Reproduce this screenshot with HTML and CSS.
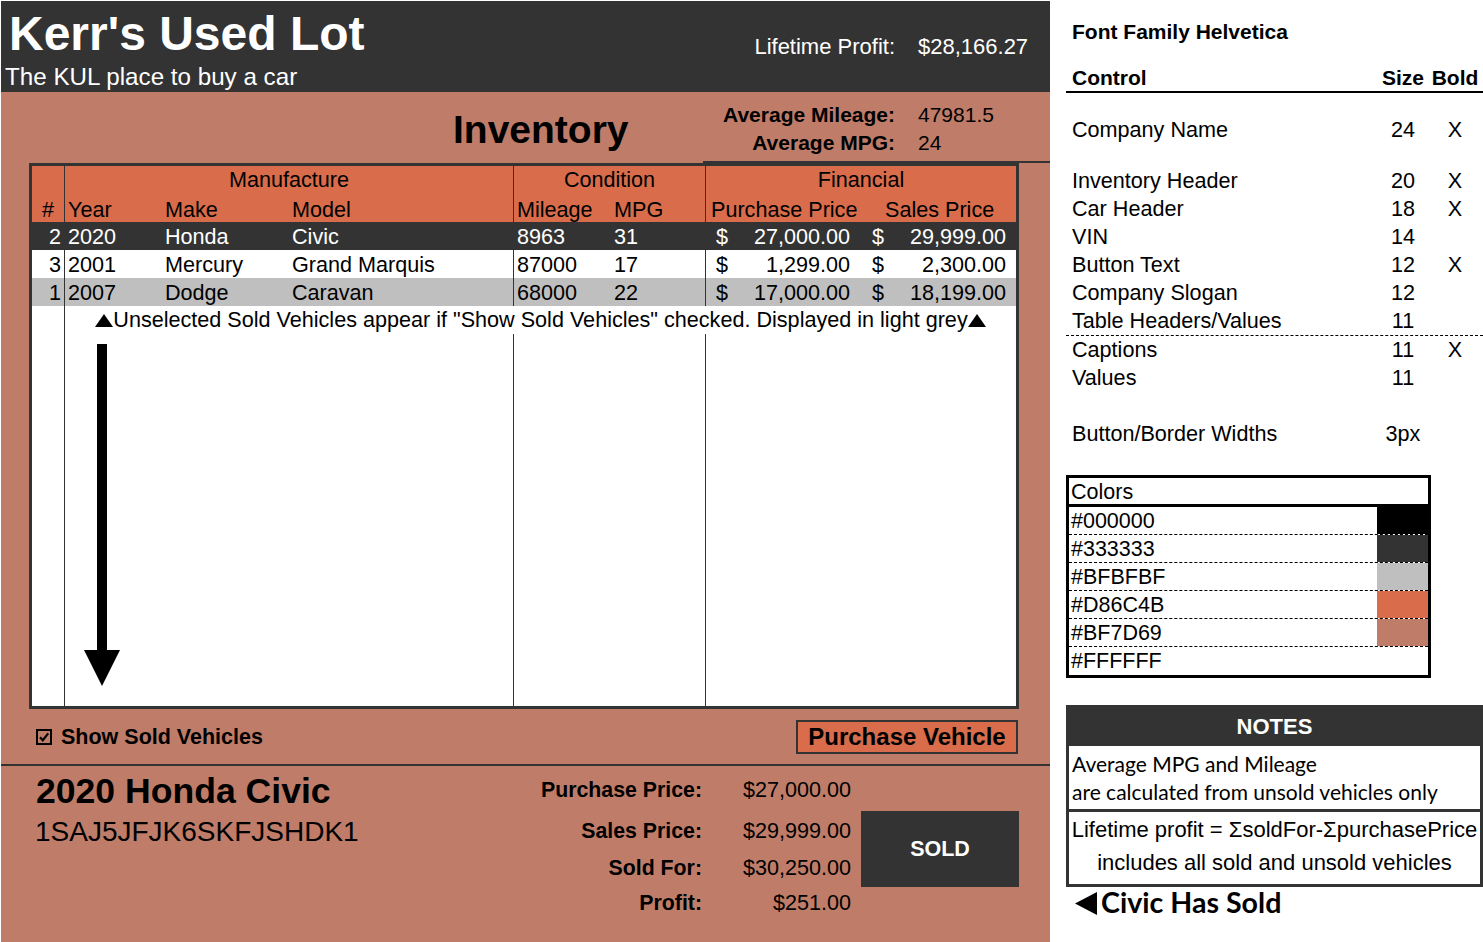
FILE: index.html
```html
<!DOCTYPE html>
<html lang="en">
<head>
<meta charset="utf-8">
<title>Kerr's Used Lot</title>
<link rel="stylesheet" href="styles.css">
</head>
<body>
<div class="page">
  <main class="lot">
    <header class="top">
      <div class="brand">
        <h1 class="brand-name">Kerr's Used Lot</h1>
        <p class="brand-slogan">The KUL place to buy a car</p>
      </div>
      <dl class="stats stats-profit">
        <dt>Lifetime Profit:</dt><dd>$28,166.27</dd>
      </dl>
    </header>

    <section class="inv-head">
      <h2 class="inv-title">Inventory</h2>
      <dl class="stats stats-avg">
        <dt>Average Mileage:</dt><dd>47981.5</dd>
        <dt>Average MPG:</dt><dd>24</dd>
      </dl>
    </section>

    <div class="inv-table">
      <div class="tr th-group">
        <div class="c c-num"></div>
        <div class="c g-manu">Manufacture</div>
        <div class="c g-cond">Condition</div>
        <div class="c g-fin">Financial</div>
      </div>
      <div class="tr th-sub">
        <div class="c c-num">#</div>
        <div class="c c-year">Year</div>
        <div class="c c-make">Make</div>
        <div class="c c-model">Model</div>
        <div class="c c-mile">Mileage</div>
        <div class="c c-mpg">MPG</div>
        <div class="c c-pp">Purchase Price</div>
        <div class="c c-sp">Sales Price</div>
      </div>
      <div class="tr td row-sel">
        <div class="c c-num">2</div>
        <div class="c c-year">2020</div>
        <div class="c c-make">Honda</div>
        <div class="c c-model">Civic</div>
        <div class="c c-mile">8963</div>
        <div class="c c-mpg">31</div>
        <div class="c c-pp money"><span>$</span><span>27,000.00</span></div>
        <div class="c c-sp money"><span>$</span><span>29,999.00</span></div>
      </div>
      <div class="tr td">
        <div class="c c-num">3</div>
        <div class="c c-year">2001</div>
        <div class="c c-make">Mercury</div>
        <div class="c c-model">Grand Marquis</div>
        <div class="c c-mile">87000</div>
        <div class="c c-mpg">17</div>
        <div class="c c-pp money"><span>$</span><span>1,299.00</span></div>
        <div class="c c-sp money"><span>$</span><span>2,300.00</span></div>
      </div>
      <div class="tr td row-sold">
        <div class="c c-num">1</div>
        <div class="c c-year">2007</div>
        <div class="c c-make">Dodge</div>
        <div class="c c-model">Caravan</div>
        <div class="c c-mile">68000</div>
        <div class="c c-mpg">22</div>
        <div class="c c-pp money"><span>$</span><span>17,000.00</span></div>
        <div class="c c-sp money"><span>$</span><span>18,199.00</span></div>
      </div>
      <div class="tr tr-caption">
        <div class="c c-num"></div>
        <div class="c cap"><svg class="tri-up" width="18" height="13" viewBox="0 0 18 13"><polygon points="0,13 18,13 9,0" fill="#000"/></svg>Unselected Sold Vehicles appear if "Show Sold Vehicles" checked. Displayed in light grey<svg class="tri-up" width="18" height="13" viewBox="0 0 18 13"><polygon points="0,13 18,13 9,0" fill="#000"/></svg></div>
      </div>
      <div class="tr tr-fill">
        <div class="c c-num"></div>
        <div class="c c-year">
          <svg class="down-arrow" width="36" height="342" viewBox="0 0 36 342"><rect x="13" y="0" width="10" height="308" fill="#000"/><polygon points="0,306 36,306 18,342" fill="#000"/></svg>
        </div>
        <div class="c c-make"></div>
        <div class="c c-model"></div>
        <div class="c c-mile"></div>
        <div class="c c-mpg"></div>
        <div class="c c-pp"></div>
        <div class="c c-sp"></div>
      </div>
    </div>

    <div class="inv-actions">
      <label class="show-sold">
        <svg class="check" width="16" height="16" viewBox="0 0 16 16"><rect x="1" y="1" width="14" height="14" fill="none" stroke="#000" stroke-width="2"/><path d="M4 8.2 L6.8 11.2 L12.2 4.4" fill="none" stroke="#000" stroke-width="2.2"/></svg>
        <span>Show Sold Vehicles</span>
      </label>
      <button class="btn-purchase" type="button">Purchase Vehicle</button>
    </div>

    <section class="detail">
      <div class="car">
        <h3 class="car-name">2020 Honda Civic</h3>
        <p class="car-vin">1SAJ5JFJK6SKFJSHDK1</p>
      </div>
      <div class="figures">
        <dl class="fig fig-1"><dt>Purchase Price:</dt><dd>$27,000.00</dd></dl>
        <dl class="fig fig-2"><dt>Sales Price:</dt><dd>$29,999.00</dd></dl>
        <dl class="fig fig-3"><dt>Sold For:</dt><dd>$30,250.00</dd></dl>
        <dl class="fig fig-4"><dt>Profit:</dt><dd>$251.00</dd></dl>
      </div>
      <button class="btn-sold" type="button">SOLD</button>
    </section>
  </main>

  <aside class="guide">
    <div class="guide-title">Font Family Helvetica</div>
    <div class="spec spec-head"><span>Control</span><span>Size</span><span>Bold</span></div>
    <div class="spec gap"><span>Company Name</span><span>24</span><span>X</span></div>
    <div class="spec gap"><span>Inventory Header</span><span>20</span><span>X</span></div>
    <div class="spec"><span>Car Header</span><span>18</span><span>X</span></div>
    <div class="spec"><span>VIN</span><span>14</span><span></span></div>
    <div class="spec"><span>Button Text</span><span>12</span><span>X</span></div>
    <div class="spec"><span>Company Slogan</span><span>12</span><span></span></div>
    <div class="spec dash"><span>Table Headers/Values</span><span>11</span><span></span></div>
    <div class="spec"><span>Captions</span><span>11</span><span>X</span></div>
    <div class="spec"><span>Values</span><span>11</span><span></span></div>
    <div class="spec wide-gap"><span>Button/Border Widths</span><span>3px</span><span></span></div>

    <div class="colors">
      <div class="colors-title">Colors</div>
      <div class="swatch-row"><span>#000000</span><span class="swatch sw-000"></span></div>
      <div class="swatch-row"><span>#333333</span><span class="swatch sw-333"></span></div>
      <div class="swatch-row"><span>#BFBFBF</span><span class="swatch sw-bfb"></span></div>
      <div class="swatch-row"><span>#D86C4B</span><span class="swatch sw-d86"></span></div>
      <div class="swatch-row"><span>#BF7D69</span><span class="swatch sw-bf7"></span></div>
      <div class="swatch-row last"><span>#FFFFFF</span><span class="swatch"></span></div>
    </div>

    <div class="notes">
      <div class="notes-head">NOTES</div>
      <div class="note-1">Average MPG and Mileage<br>are calculated from unsold vehicles only</div>
      <div class="note-2">Lifetime profit = ΣsoldFor-ΣpurchasePrice<br>includes all sold and unsold vehicles</div>
    </div>
    <div class="sold-note"><svg class="tri-left" width="22" height="23" viewBox="0 0 22 23"><polygon points="22,0 22,23 0,11.5" fill="#000"/></svg>Civic Has Sold</div>
  </aside>
</div>
</body>
</html>
```

FILE: styles.css
```css
* { box-sizing: border-box; margin: 0; padding: 0; }

body {
  background: #fff;
  color: #000;
  font-family: "Liberation Sans", Arial, Helvetica, sans-serif;
}

.page {
  display: flex;
  width: 1483px;
  height: 942px;
  padding-top: 1px;
  overflow: hidden;
}

/* ---------- left: the lot ---------- */
.lot {
  width: 1049px;
  height: 941px;
  margin-left: 1px;
  background: #BF7D69;
  display: flex;
  flex-direction: column;
  flex-shrink: 0;
}

.top {
  height: 91px;
  background: #333;
  color: #fff;
  display: flex;
  flex-shrink: 0;
}

.brand { flex: 1; padding-left: 4px; }

.brand-name {
  font-size: 48px;
  font-weight: 700;
  line-height: 48px;
  margin-top: 9px;
  padding-left: 4px;
}

.brand-slogan {
  font-size: 24.2px;
  line-height: 28px;
  margin-top: 5px;
}

.stats {
  width: 347px;
  display: grid;
  grid-template-columns: 192px 1fr;
  column-gap: 23px;
  align-content: start;
  white-space: nowrap;
}

.stats dt { text-align: right; font-weight: 700; }

.stats-profit {
  margin-top: 32px;
  font-size: 22px;
  line-height: 28px;
}

.stats-profit dt { font-weight: 400; }

.inv-head {
  display: flex;
  height: 71px;
  flex-shrink: 0;
}

.inv-title {
  width: 702px;
  padding-left: 452px;
  padding-top: 16px;
  font-size: 39px;
  line-height: 44px;
  font-weight: 700;
}

.stats-avg {
  height: 71px;
  padding-top: 9px;
  font-size: 21px;
  line-height: 28px;
  border-bottom: 2px solid #333;
}

/* ---------- table ---------- */
.inv-table {
  width: 990px;
  height: 546px;
  margin-left: 28px;
  border: 3px solid #333;
  background: #fff;
  flex-shrink: 0;
  font-size: 21.6px;
}

.tr {
  display: grid;
  grid-template-columns: 33px 97px 127px 225px 97px 95px 160px 150px;
  grid-template-rows: 28px;
  height: 28px;
  line-height: 28px;
  white-space: nowrap;
}

.th-group, .th-sub { background: #D86C4B; }
.th-sub .c { line-height: 32px; }
.td .c { line-height: 30px; }

.row-sel { background: #333; color: #fff; }
.row-sold { background: #BFBFBF; }

.c-num {
  border-right: 1px solid #333;
  text-align: right;
  padding-right: 3px;
}

.th-sub .c-num { text-align: center; padding-right: 0; }

.c-year, .c-make, .c-model, .c-mile, .c-mpg { padding-left: 3px; }

.c-model, .c-mpg { border-right: 1px solid #333; }

.g-manu { grid-column: span 3; text-align: center; border-right: 1px solid #333; }
.g-cond { grid-column: span 2; text-align: center; border-right: 1px solid #333; }
.g-fin { grid-column: span 2; text-align: center; }

.th-sub .c-pp { padding-left: 5px; }
.th-sub .c-sp { padding-left: 19px; }

.money { display: flex; justify-content: space-between; }
.c-pp.money { padding-left: 10px; padding-right: 16px; }
.c-sp.money { padding-left: 6px; padding-right: 10px; }

.cap { grid-column: span 7; text-align: center; }
.tri-up { vertical-align: baseline; }

.tr-fill {
  height: 372px;
  grid-template-rows: 372px;
}

.down-arrow {
  display: block;
  margin-left: 16px;
  margin-top: 10px;
}

/* ---------- actions ---------- */
.inv-actions {
  height: 55px;
  flex-shrink: 0;
  display: flex;
  align-items: center;
  justify-content: space-between;
  padding: 0 32px 0 35px;
}

.show-sold {
  display: flex;
  align-items: center;
  gap: 9px;
  font-size: 21.5px;
  font-weight: 700;
  line-height: 28px;
}

.check { display: block; }

.btn-purchase {
  width: 222px;
  height: 34px;
  background: #D86C4B;
  border: 2px solid #333;
  color: #000;
  font-family: "Liberation Sans", Arial, sans-serif;
  font-size: 24px;
  font-weight: 700;
  line-height: 30px;
  padding: 0;
}

/* ---------- detail ---------- */
.detail {
  flex: 1;
  display: flex;
  border-top: 2px solid #333;
  padding: 0 31px 0 34px;
}

.car { flex: 1; }

.car-name {
  font-size: 35.6px;
  font-weight: 700;
  line-height: 40px;
  margin-top: 5px;
  padding-left: 1px;
}

.car-vin {
  font-size: 28px;
  line-height: 32px;
  margin-top: 5px;
}

.figures { width: 349px; }

.fig {
  display: grid;
  grid-template-columns: 200px 149px;
  font-size: 21.6px;
  line-height: 28px;
  white-space: nowrap;
}

.fig dt { font-weight: 700; font-size: 21.3px; text-align: right; }
.fig dd { text-align: right; }

.fig-1 { margin-top: 10px; }
.fig-2 { margin-top: 13px; }
.fig-3 { margin-top: 9px; }
.fig-4 { margin-top: 7px; }

.btn-sold {
  width: 158px;
  height: 76px;
  margin-top: 45px;
  margin-left: 10px;
  background: #333;
  color: #fff;
  border: 0;
  font-family: "Liberation Sans", Arial, sans-serif;
  font-size: 21.5px;
  font-weight: 700;
}

/* ---------- right: style guide ---------- */
.guide {
  width: 433px;
  flex-shrink: 0;
  padding-left: 16px;
  font-size: 21.6px;
  line-height: 28px;
  white-space: nowrap;
}

.guide-title {
  font-size: 21px;
  font-weight: 700;
  margin-top: 17px;
  padding-left: 6px;
}

.spec {
  display: grid;
  grid-template-columns: 313px 48px 56px;
  height: 28px;
}

.spec > span:first-child { padding-left: 6px; }
.spec > span:nth-child(2),
.spec > span:nth-child(3) { text-align: center; }

.spec-head {
  height: 29px;
  margin-top: 18px;
  font-size: 21px;
  font-weight: 700;
  border-bottom: 2px solid #000;
}

.spec.gap { margin-top: 23px; }
.spec.dash { height: 29px; border-bottom: 1px dashed #000; }
.spec.wide-gap { margin-top: 28px; }

.colors {
  width: 365px;
  margin-top: 27px;
  border: 3px solid #000;
  font-size: 21.5px;
}

.colors-title {
  height: 29px;
  padding-left: 2px;
  border-bottom: 3px solid #000;
}

.swatch-row {
  display: flex;
  justify-content: space-between;
  height: 28px;
  padding-left: 2px;
  border-bottom: 1px dashed #000;
}

.swatch-row.last { border-bottom: 0; }

.swatch { width: 51px; height: 100%; }
.sw-000 { background: #000; }
.sw-333 { background: #333; }
.sw-bfb { background: #BFBFBF; }
.sw-d86 { background: #D86C4B; }
.sw-bf7 { background: #BF7D69; }

.notes {
  width: 417px;
  margin-top: 27px;
  border: 3px solid #333;
  border-top: 0;
}

.notes-head {
  height: 41px;
  background: #333;
  color: #fff;
  text-align: center;
  font-size: 22px;
  font-weight: 700;
  line-height: 43px;
}

.note-1 {
  height: 63px;
  padding: 4px 0 0 3px;
  font-family: Lato, "Liberation Sans", sans-serif;
  font-size: 21px;
  line-height: 28px;
}

.note-2 {
  height: 75px;
  padding-top: 1px;
  border-top: 3px solid #333;
  text-align: center;
  font-size: 22px;
  line-height: 33px;
}

.sold-note {
  padding-left: 9px;
  font-family: Lato, "Liberation Sans", sans-serif;
  font-size: 28.6px;
  font-weight: 700;
  line-height: 30px;
}

.tri-left { vertical-align: -2px; margin-right: 4px; }
```
